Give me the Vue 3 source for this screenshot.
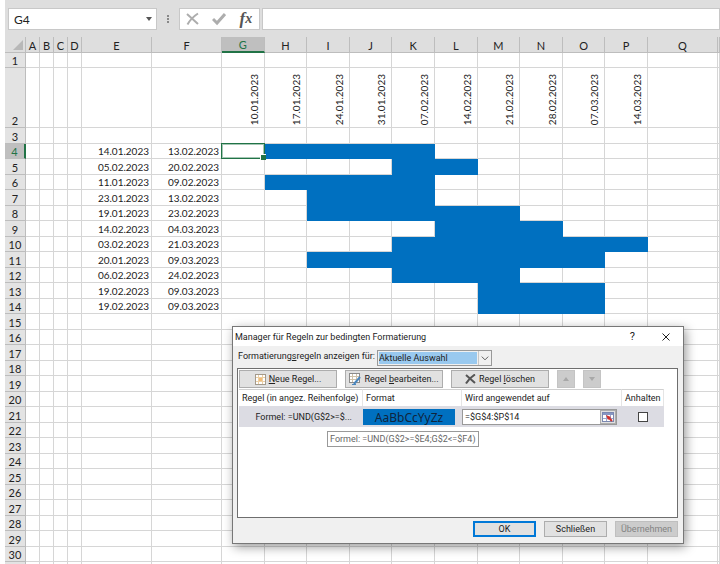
<script setup>
import { ref } from 'vue'

const narrowCols = ['A', 'B', 'C', 'D']
const weekCols = [
  { name: 'G', date: '10.01.2023' },
  { name: 'H', date: '17.01.2023' },
  { name: 'I', date: '24.01.2023' },
  { name: 'J', date: '31.01.2023' },
  { name: 'K', date: '07.02.2023' },
  { name: 'L', date: '14.02.2023' },
  { name: 'M', date: '21.02.2023' },
  { name: 'N', date: '28.02.2023' },
  { name: 'O', date: '07.03.2023' },
  { name: 'P', date: '14.03.2023' }
]

// first row of tasks is sheet row 4
const tasks = [
  { start: '14.01.2023', end: '13.02.2023', filled: 'HIJK' },
  { start: '05.02.2023', end: '20.02.2023', filled: 'KL' },
  { start: '11.01.2023', end: '09.02.2023', filled: 'HIJK' },
  { start: '23.01.2023', end: '13.02.2023', filled: 'IJK' },
  { start: '19.01.2023', end: '23.02.2023', filled: 'IJKLM' },
  { start: '14.02.2023', end: '04.03.2023', filled: 'LMN' },
  { start: '03.02.2023', end: '21.03.2023', filled: 'KLMNOP' },
  { start: '20.01.2023', end: '09.03.2023', filled: 'IJKLMNO' },
  { start: '06.02.2023', end: '24.02.2023', filled: 'KLM' },
  { start: '19.02.2023', end: '09.03.2023', filled: 'MNO' },
  { start: '19.02.2023', end: '09.03.2023', filled: 'MNO' }
]

const lastRow = 30

const cellName = ref('G4')
const formula = ref('')
const range = ref('=$G$4:$P$14')
const stopIfTrue = ref(false)

const task = (row) => tasks[row - 4]
const isFilled = (row, col) => !!task(row) && task(row).filled.includes(col)
const isSelected = (row, col) => row === 4 && col === 'G'
</script>

<template>
  <div class="app">
    <div class="formula-bar">
      <div class="name-box">
        <input v-model="cellName" aria-label="Namenfeld">
        <span class="caret"></span>
      </div>
      <span class="dots"><i></i><i></i><i></i></span>
      <div class="formula-tools">
        <button aria-label="Abbrechen">
          <svg width="14" height="14" viewBox="0 0 14 14"><path d="M1 2 L12 12 M12 1.5 C8 4 4 8 1.5 12.5" /></svg>
        </button>
        <button aria-label="Eingeben">
          <svg width="14" height="14" viewBox="0 0 14 14"><path class="thick" d="M1 7 L5 11 L13 2" /></svg>
        </button>
        <button class="fx" aria-label="Funktion einfügen">f<span>x</span></button>
      </div>
      <input v-model="formula" class="formula" aria-label="Bearbeitungsleiste">
    </div>

    <table class="sheet">
      <colgroup>
        <col class="col-head">
        <col v-for="c in narrowCols" :key="c" class="col-narrow">
        <col class="col-date">
        <col class="col-date">
        <col v-for="c in weekCols" :key="c.name">
        <col class="col-date">
        <col class="col-rest">
      </colgroup>
      <thead>
        <tr>
          <th class="corner">
            <svg width="10" height="10" viewBox="0 0 10 10"><path d="M10 0 V10 H0 Z" /></svg>
          </th>
          <th v-for="c in narrowCols" :key="c">{{ c }}</th>
          <th>E</th>
          <th>F</th>
          <th v-for="c in weekCols" :key="c.name" :class="{ active: c.name === 'G' }">{{ c.name }}</th>
          <th>Q</th>
          <th></th>
        </tr>
      </thead>
      <tbody>
        <tr v-for="row in lastRow + 1" :key="row" :class="{ 'date-row': row === 2 }">
          <th :class="{ active: row === 4 }">{{ row <= lastRow ? row : '' }}</th>
          <td v-for="c in narrowCols" :key="c"></td>
          <td class="date">{{ task(row)?.start }}</td>
          <td class="date">{{ task(row)?.end }}</td>
          <td
            v-for="c in weekCols"
            :key="c.name"
            :class="{ filled: isFilled(row, c.name), selected: isSelected(row, c.name) }"
          >
            <span v-if="row === 2" class="vertical">{{ c.date }}</span>
          </td>
          <td></td>
          <td></td>
        </tr>
      </tbody>
    </table>

    <div class="dialog" role="dialog" aria-labelledby="dialog-title">
      <div class="title-bar">
        <span id="dialog-title">Manager für Regeln zur bedingten Formatierung</span>
        <button class="help">?</button>
        <button class="close" aria-label="Fenster schließen">
          <svg width="8" height="8" viewBox="0 0 8 8"><path d="M0.5 0.5 L7.5 7.5 M7.5 0.5 L0.5 7.5" /></svg>
        </button>
      </div>

      <div class="scope">
        <label for="scope">Formatierung<u>s</u>regeln anzeigen für:</label>
        <div class="select">
          <select id="scope">
            <option>Aktuelle Auswahl</option>
          </select>
          <svg width="13" height="14" viewBox="0 0 13 14"><path d="M3 5.5 L6.5 9 L10 5.5" /></svg>
        </div>
      </div>

      <div class="rules">
        <div class="toolbar">
          <button class="tool">
            <svg width="11" height="11" viewBox="0 0 11 11">
              <rect x="0.5" y="0.5" width="10" height="10" fill="#fff" stroke="#a39a8c" />
              <path d="M1 3.5H10M1 7.5H10M3.5 1V10M7.5 1V10" stroke="#ecd0a6" />
              <rect x="4" y="4" width="3" height="3" fill="#f3bd78" />
            </svg>
            <span><u>N</u>eue Regel...</span>
          </button>
          <button class="tool">
            <svg width="12" height="12" viewBox="0 0 12 12">
              <rect x="0.5" y="0.5" width="10" height="9" fill="#fff" stroke="#8c8c8c" />
              <path d="M1 3.5H10M1 6.5H10M3.5 1V9M7.5 1V9" stroke="#cfc2aa" />
              <path d="M5 11 L11 4" stroke="#4a86bd" stroke-width="2" />
              <path d="M3 11.5H7" stroke="#4a86bd" />
            </svg>
            <span>Regel <u>b</u>earbeiten...</span>
          </button>
          <button class="tool">
            <svg width="11" height="10" viewBox="0 0 11 10">
              <path d="M1 1 L10 9 M10 0.5 C6 3 3 6 1 9.5" fill="none" stroke="#555" stroke-width="2" />
            </svg>
            <span>Regel <u>l</u>öschen</span>
          </button>
          <button class="move" disabled aria-label="Nach oben"><i class="up"></i></button>
          <button class="move" disabled aria-label="Nach unten"><i class="down"></i></button>
        </div>

        <table class="rule-table">
          <colgroup>
            <col class="col-rule">
            <col class="col-format">
            <col>
            <col class="col-stop">
          </colgroup>
          <thead>
            <tr>
              <th>Regel (in angez. Reihenfolge)</th>
              <th>Format</th>
              <th>Wird angewendet auf</th>
              <th>Anhalten</th>
            </tr>
          </thead>
          <tbody>
            <tr>
              <td class="rule-name">Formel: =UND(G$2&gt;=$...</td>
              <td><div class="preview">AaBbCcYyZz</div></td>
              <td>
                <div class="range">
                  <input v-model="range" aria-label="Wird angewendet auf">
                  <button aria-label="Bereich auswählen">
                    <svg width="12" height="10" viewBox="0 0 12 10">
                      <rect x="0.5" y="0.5" width="11" height="9" fill="#fff" stroke="#7a88b0" />
                      <rect x="1" y="1" width="10" height="2" fill="#8797c4" />
                      <path d="M1 6.5H11M4.5 3V9M8.5 3V9" stroke="#9ba7cc" />
                      <path d="M4 3 L9 5 L6 8Z" fill="#d0312d" />
                      <path d="M7 6 L10 9" stroke="#d0312d" stroke-width="2" />
                    </svg>
                  </button>
                </div>
              </td>
              <td class="stop"><input v-model="stopIfTrue" type="checkbox" aria-label="Anhalten"></td>
            </tr>
          </tbody>
        </table>
        <div class="tooltip" role="tooltip">Formel: =UND(G$2&gt;=$E4;G$2&lt;=$F4)</div>
      </div>

      <div class="actions">
        <button class="primary">OK</button>
        <button>Schließen</button>
        <button disabled>Übernehmen</button>
      </div>
    </div>
  </div>
</template>

<style>
body {
  margin: 0;
  background: #fff;
}
</style>

<style scoped>
* {
  box-sizing: border-box;
}

.app {
  position: relative;
  height: 100vh;
  overflow: hidden;
  padding-left: 5px;
  font-family: Lato, 'Liberation Sans', sans-serif;
  color: #222;
}

button,
input,
select {
  margin: 0;
  padding: 0;
  border: 0;
  font: inherit;
  color: inherit;
  background: none;
  outline: none;
}

/* formula bar */
.formula-bar {
  display: flex;
  height: 37px;
  padding: 8px 0 7px 3px;
  background: #dedede;
}

.name-box,
.formula-tools,
.formula {
  height: 22px;
  background: #fff;
  border: 1px solid #c8c8c8;
}

.name-box {
  display: flex;
  align-items: center;
  width: 149px;
  padding: 0 4px 0 5px;
}

.name-box input {
  flex: 1;
  min-width: 0;
  font-size: 12px;
}

.caret {
  border: 3px solid transparent;
  border-top: 4px solid #555;
  border-bottom: 0;
}

.dots {
  display: flex;
  flex-direction: column;
  align-items: center;
  justify-content: center;
  gap: 1px;
  width: 22px;
}

.dots i {
  width: 2px;
  height: 2px;
  background: #888;
}

.formula-tools {
  display: flex;
  align-items: center;
  width: 81px;
}

.formula-tools button {
  display: flex;
  flex: 1;
  align-items: center;
  justify-content: center;
}

.formula-tools path {
  fill: none;
  stroke: #adadad;
  stroke-width: 2;
}

.formula-tools .thick {
  stroke-width: 3;
}

.formula-tools .fx {
  font: italic bold 17px/18px 'Liberation Serif', serif;
  color: #555;
}

.fx span {
  font-size: 14px;
}

.formula {
  flex: 1;
  min-width: 0;
  margin-left: 2px;
  font-size: 12px;
}

/* worksheet */
.sheet {
  width: 100%;
  table-layout: fixed;
  border-collapse: separate;
  border-spacing: 0;
  font-size: 10px;
  line-height: 13px;
}

.col-head {
  width: 21px;
}

.col-narrow {
  width: 14px;
}

.col-date {
  width: 70px;
}

.col-rest {
  width: 2px;
}

.sheet th,
.sheet td {
  height: 15px;
  padding: 1px 0 0;
  border: solid #d6d6d6;
  border-width: 0 1px 1px 0;
}

.sheet tr:nth-child(odd) > * {
  height: 16px;
}

.sheet th {
  font-size: 11px;
  font-weight: 400;
  background: #e3e3e3;
  border-color: #bdbdbd;
}

.sheet thead tr th {
  height: 16px;
  background: #dedede;
}

.sheet tbody tr:first-child > * {
  height: 15px;
}

.sheet tbody .date-row > * {
  height: 60px;
  vertical-align: bottom;
}

.sheet .corner {
  padding-right: 2px;
  text-align: right;
}

.corner svg {
  display: block;
  margin-left: auto;
}

.corner path {
  fill: #b8b8b8;
}

.sheet th.active {
  color: #217346;
  background: #bfbfbf;
}

.sheet thead th.active {
  padding: 1px 0 0;
  line-height: 12px;
  border-bottom: 2px solid #217346;
}

.sheet tbody th.active {
  border-right: 2px solid #217346;
}

.sheet .date {
  padding-right: 2px;
  text-align: right;
}

.vertical {
  display: block;
  margin: 0 3px 0 auto;
  padding-top: 2px;
  writing-mode: vertical-rl;
  transform: rotate(180deg);
}

.sheet .filled {
  background: #0070c0;
  border-color: #0070c0;
}

.sheet .selected {
  position: relative;
}

.selected::before {
  content: '';
  position: absolute;
  inset: -1px -1px -1px -1px;
  border: 1px solid #217346;
  outline: 1px solid rgba(33, 115, 70, 0.4);
  outline-offset: -2px;
}

.selected::after {
  content: '';
  position: absolute;
  right: -2px;
  bottom: -2px;
  width: 5px;
  height: 5px;
  background: #217346;
  border: solid #fff;
  border-width: 1px 0 0 1px;
}

/* rules manager window */
.dialog {
  position: absolute;
  top: 326px;
  left: 232px;
  width: 452px;
  background: #f0f0f0;
  border: 1px solid #777;
  box-shadow: 2px 3px 10px rgba(0, 0, 0, 0.4);
  font-family: Roboto, 'Noto Sans', sans-serif;
  font-size: 9px;
  line-height: 12px;
}

.title-bar {
  display: flex;
  align-items: center;
  height: 19px;
  padding: 0 13px 0 2px;
  background: #fff;
}

.title-bar .help {
  margin-left: auto;
  font-size: 11px;
}

.title-bar .close {
  display: flex;
  margin-left: 27px;
}

.close path {
  fill: none;
  stroke: #222;
}

.scope {
  display: flex;
  height: 22px;
  padding: 4px 5px 0;
}

.scope label {
  width: 139px;
}

.select {
  display: flex;
  width: 115px;
  height: 16px;
  background: #f0f0f0;
  border: 1px solid #999;
}

.select select {
  flex: 1;
  min-width: 0;
  margin: 1px;
  appearance: none;
  background: #99c9ef;
}

.select svg {
  border-left: 1px solid #c8c8c8;
}

.select path {
  fill: none;
  stroke: #555;
}

.rules {
  position: relative;
  height: 150px;
  margin: 0 5px 0 4px;
  background: #fff;
  border: 1px solid #6e6e6e;
}

.toolbar {
  display: flex;
  gap: 8px;
  padding: 1px;
}

.toolbar button {
  display: flex;
  align-items: center;
  justify-content: center;
  gap: 3px;
  height: 18px;
  background: #e1e1e1;
  border: 1px solid #adadad;
}

.tool {
  width: 98px;
}

.toolbar .move {
  width: 18px;
  background: #ccc;
  border-color: #c4c4c4;
}

.move i {
  border: 3px solid transparent;
}

.move .up {
  border-top: 0;
  border-bottom: 4px solid #a8a8a8;
}

.move .down {
  border-bottom: 0;
  border-top: 4px solid #a8a8a8;
}

.rule-table {
  width: 425px;
  margin-left: 1px;
  table-layout: fixed;
  border-collapse: separate;
  border-spacing: 0;
}

.col-rule {
  width: 124px;
}

.col-format {
  width: 99px;
}

.col-stop {
  width: 42px;
}

.rule-table th {
  height: 17px;
  padding: 0 3px;
  border-right: 1px solid #e5e5e5;
  border-top: 1px solid #d0d0d0;
  font-weight: 400;
  text-align: left;
  white-space: nowrap;
}

.rule-table td {
  height: 21px;
  padding: 0;
  background: #dcdce3;
}

.rule-table .rule-name {
  padding-right: 11px;
  text-align: right;
}

.preview {
  width: 92px;
  height: 16px;
  font: 13px/17px 'Noto Sans', sans-serif;
  font-size: 12px;
  text-align: center;
  color: #10243c;
  background: #0070c0;
}

.range {
  display: flex;
  width: 155px;
  height: 16px;
  background: #fff;
  border: 1px solid #999;
}

.range input {
  flex: 1;
  min-width: 0;
  padding-left: 2px;
}

.range button {
  display: flex;
  align-items: center;
  justify-content: center;
  width: 16px;
  background: #e1e1e1;
  border: 1px solid #adadad;
}

.stop input {
  display: block;
  width: 10px;
  height: 10px;
  margin: 0 auto;
  appearance: none;
  background: #fff;
  border: 1px solid #444;
}

.tooltip {
  position: absolute;
  top: 62px;
  left: 89px;
  padding: 1px 2px;
  color: #666;
  white-space: nowrap;
  background: #fff;
  border: 1px solid #999;
}

.actions {
  display: flex;
  justify-content: flex-end;
  gap: 8px;
  padding: 3px 5px 6px;
}

.actions button {
  width: 63px;
  height: 16px;
  background: #e1e1e1;
  border: 1px solid #adadad;
}

.actions .primary {
  border: 2px solid #0078d7;
}

.actions button:disabled {
  color: #838383;
  background: #ccc;
  border-color: #bfbfbf;
}
</style>
